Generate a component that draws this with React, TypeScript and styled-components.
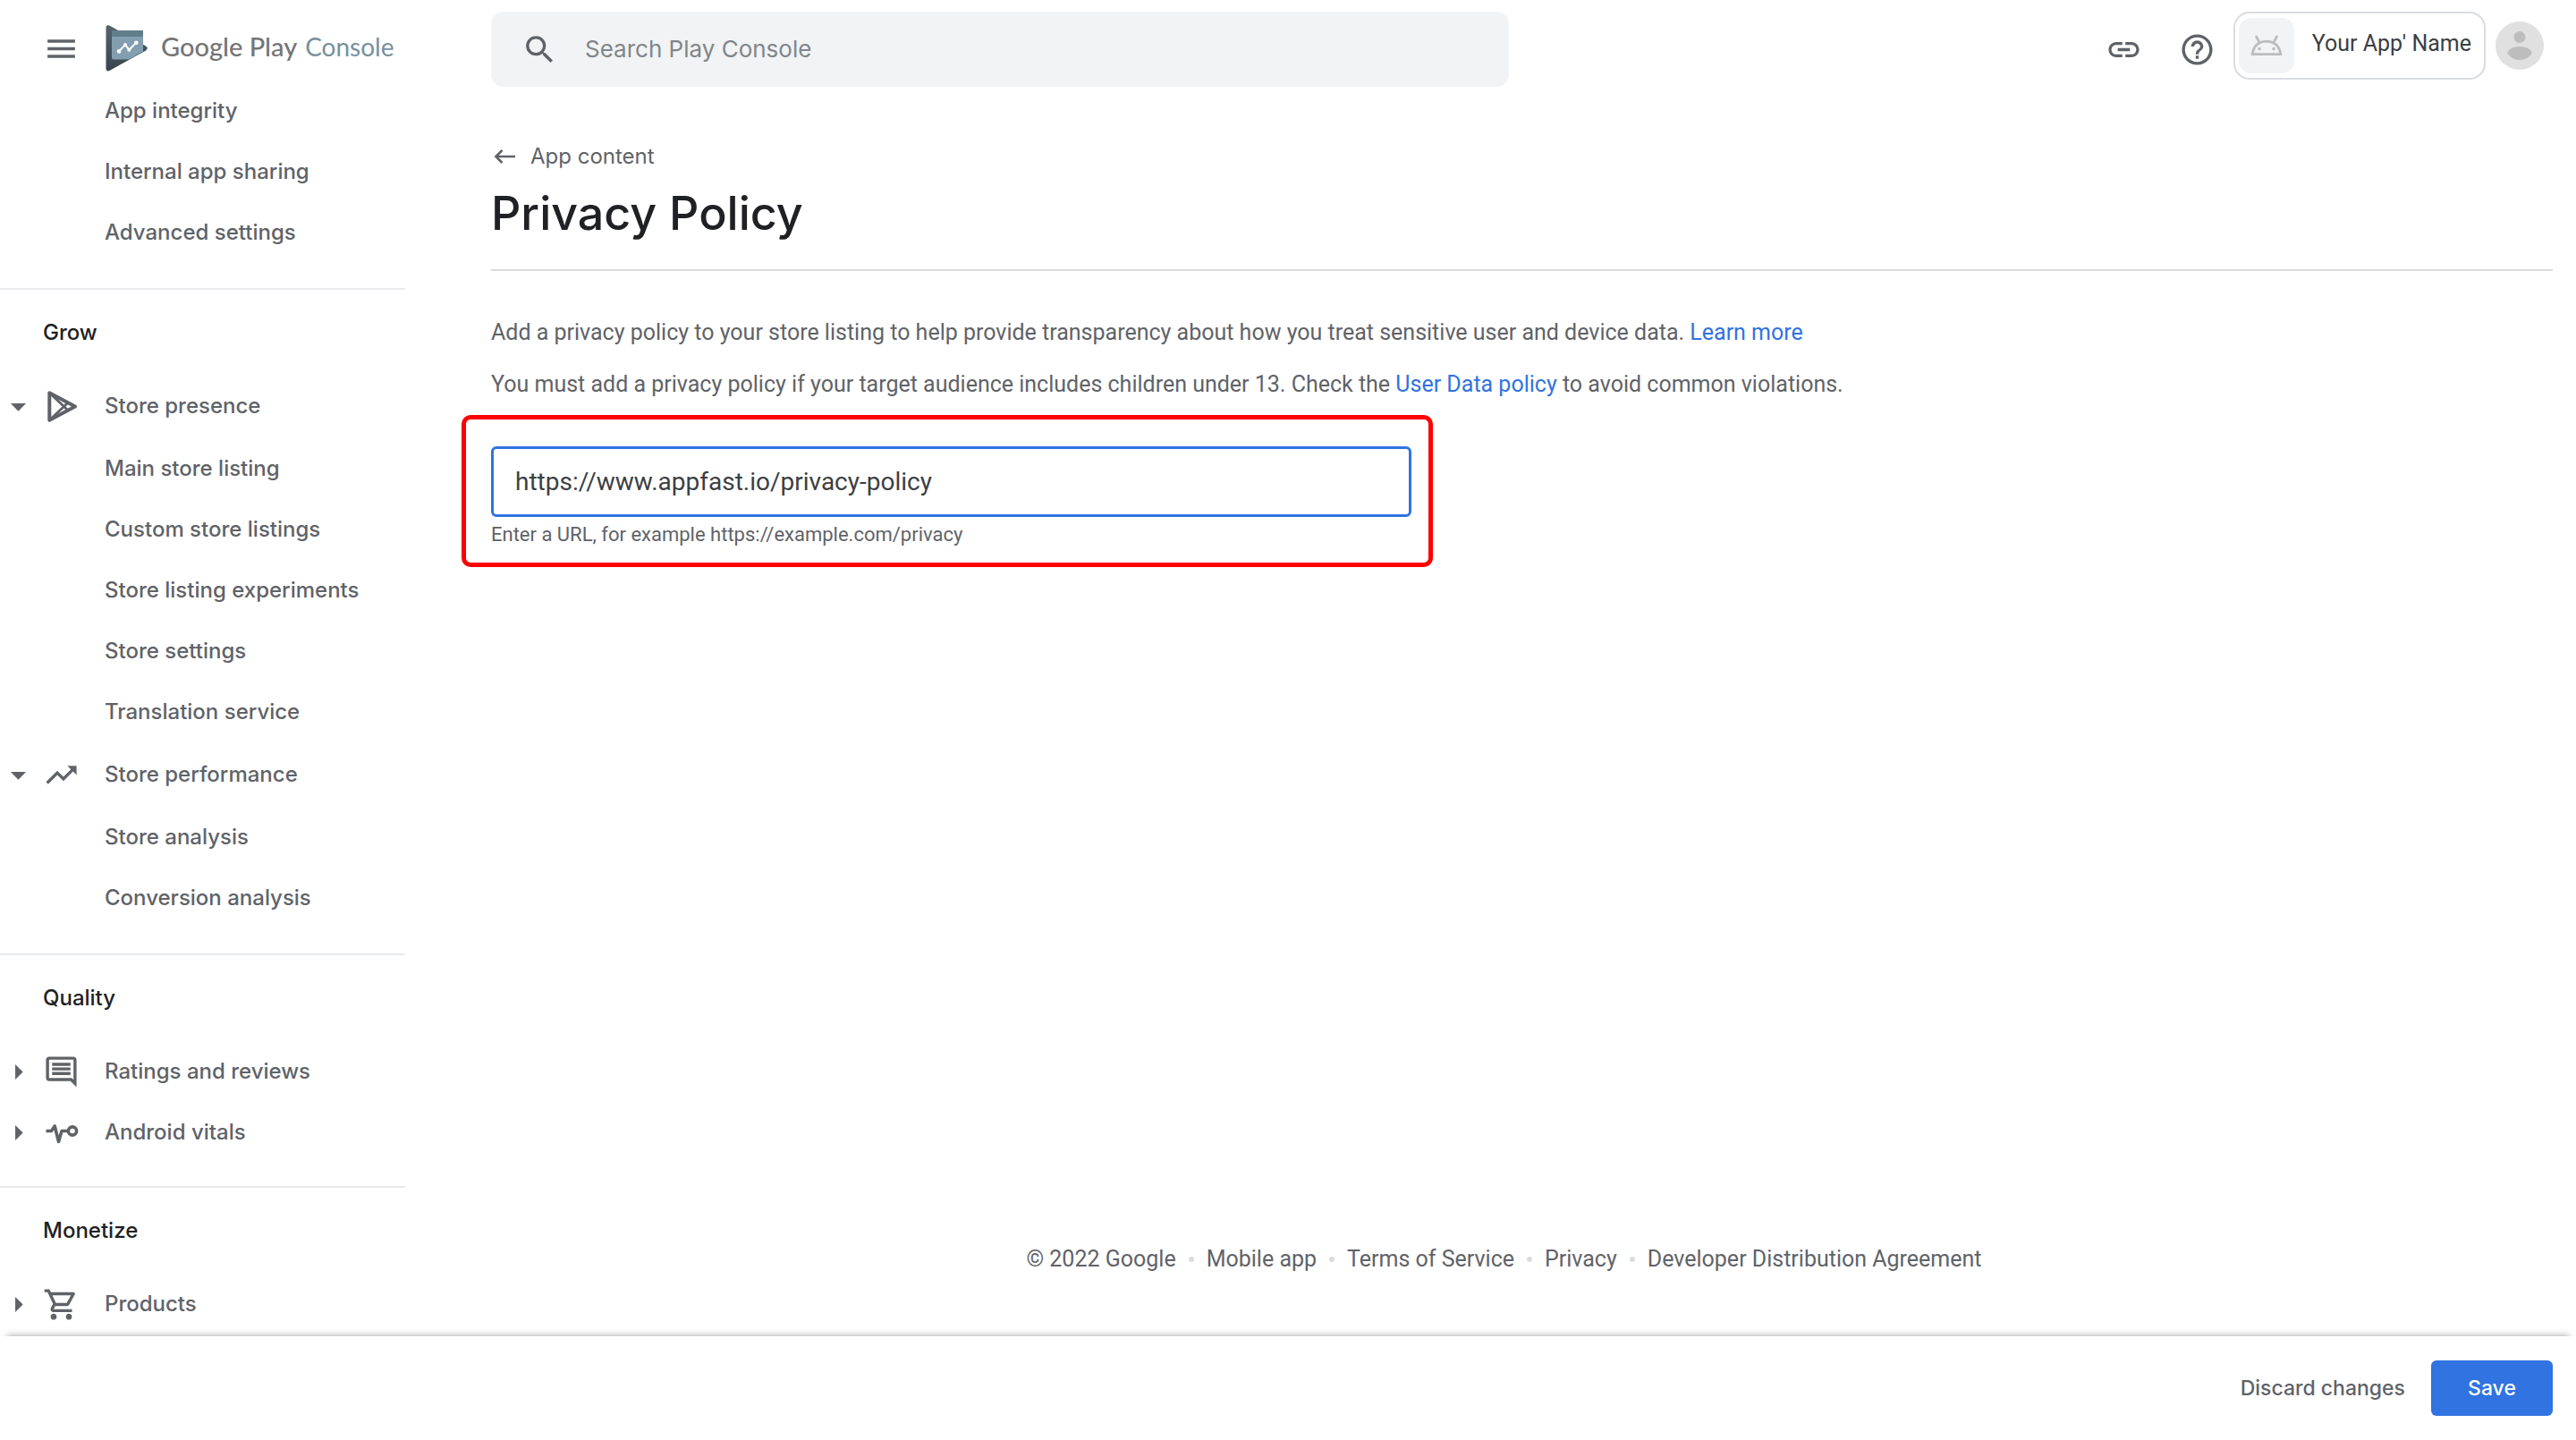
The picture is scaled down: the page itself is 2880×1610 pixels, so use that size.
import React from 'react';
import styled, { createGlobalStyle } from 'styled-components';
import {
  MdArrowDropDown,
  MdArrowRight,
  MdHelpOutline,
  MdLink,
  MdMenu,
  MdOutlineComment,
  MdOutlineShoppingCart,
  MdSearch,
  MdTrendingUp,
} from 'react-icons/md';

const color = {
  ink: '#202124',
  strong: '#3c4043',
  muted: '#5f6368',
  hint: '#80868b',
  line: '#dadce0',
  faintLine: '#e8eaed',
  fill: '#f1f3f4',
  blue: '#3073e1',
  mark: '#ff0000',
};

const display = `Inter, "Noto Sans", sans-serif`;
const text = `Roboto, "Noto Sans", sans-serif`;

const GlobalStyle = createGlobalStyle`
  *, *::before, *::after { box-sizing: border-box; }
  body { margin: 0; background: #fff; color: ${color.muted}; font: 400 25px/36px ${text}; }
  h1, h2, p, ul { margin: 0; padding: 0; }
  ul { list-style: none; }
  button, input { font: inherit; color: inherit; }
  button { padding: 0; border: 0; background: none; cursor: pointer; }
  a { color: inherit; text-decoration: none; }
  svg { display: block; flex: none; }
`;

const Page = styled.div`
  display: flex;
  flex-direction: column;
  height: 100vh;
`;

const Body = styled.div`
  display: grid;
  grid-template-columns: 453px minmax(0, 1fr);
  flex: 1;
  min-height: 0;
`;

/* Sidebar */

const Sidebar = styled.aside`
  overflow: hidden;
`;

const Brand = styled.div`
  display: flex;
  align-items: center;
  height: 88px;
  padding: 20px 0 0 48px;
`;

const MenuButton = styled.button`
  color: ${color.muted};
`;

const BrandLink = styled.a`
  display: flex;
  align-items: center;
  gap: 14px;
  margin-left: 29px;
`;

const Wordmark = styled.span`
  display: flex;
  align-items: baseline;
  gap: 9px;
  padding-bottom: 4px;
  font-family: Lato, "Noto Sans", sans-serif;
  font-weight: 500;
  font-size: 29px;
  white-space: nowrap;
  color: #757575;
`;

const WordmarkProduct = styled.span`
  font-weight: 400;
  font-size: 28px;
  color: #78909c;
`;

const NavSection = styled.section`
  padding-bottom: 26px;
  & + & {
    border-top: 2px solid ${color.faintLine};
  }
`;

const SectionTitle = styled.h2`
  padding-left: 48px;
  font: 500 24px/96px ${display};
  color: ${color.ink};
`;

const GroupButton = styled.button`
  display: flex;
  align-items: center;
  width: 100%;
  height: 68px;
  font: 500 24px/68px ${display};
  text-align: left;
`;

const GroupIcon = styled.span`
  margin: 0 28px 0 7px;
`;

const SubList = styled.ul`
  padding: 2px 0;
`;

const SubLink = styled.a`
  display: block;
  padding-left: 117px;
  font: 500 24px/68px ${display};
`;

/* Top bar */

const Main = styled.main`
  display: flex;
  flex-direction: column;
  padding: 0 26px 0 96px;
`;

const TopBar = styled.header`
  display: flex;
  align-items: flex-start;
  padding: 13px 0;
  margin-right: 10px;
`;

const SearchBox = styled.label`
  display: flex;
  align-items: center;
  flex: 0 1 1138px;
  height: 84px;
  padding: 0 34px;
  gap: 30px;
  border-radius: 14px;
  background: ${color.fill};
`;

const SearchInput = styled.input`
  flex: 1;
  min-width: 0;
  padding: 0;
  border: 0;
  outline: 0;
  background: none;
  font: 400 26px/36px ${display};
  &::placeholder {
    color: ${color.hint};
    opacity: 1;
  }
`;

const Tools = styled.div`
  display: flex;
  align-items: center;
  gap: 41px;
  height: 84px;
  margin: 0 20px 0 auto;
`;

const Account = styled.div`
  display: flex;
  align-items: center;
  gap: 11px;
`;

const AppButton = styled.button`
  display: flex;
  align-items: center;
  gap: 20px;
  height: 76px;
  padding: 0 14px 0 4px;
  border: 2px solid ${color.line};
  border-radius: 18px;
  color: ${color.strong};
`;

const AppIcon = styled.span`
  display: grid;
  place-items: center;
  width: 62px;
  height: 62px;
  border-radius: 14px;
  background: ${color.fill};
`;

const AppName = styled.span`
  padding-bottom: 4px;
`;

const AvatarButton = styled.button`
  border-radius: 50%;
`;

/* Page content */

const Back = styled.a`
  display: flex;
  align-items: center;
  align-self: flex-start;
  gap: 9px;
  margin-top: 47px;
  font: 400 24px/36px ${display};
`;

const Title = styled.h1`
  padding: 14px 0 30px;
  border-bottom: 2px solid ${color.line};
  font: 500 52px/64px ${display};
  color: ${color.ink};
`;

const Intro = styled.div`
  display: flex;
  flex-direction: column;
  gap: 22px;
  padding: 51px 0 16px;
`;

const TextLink = styled.a`
  color: ${color.blue};
`;

const Highlight = styled.div`
  display: flex;
  flex-direction: column;
  gap: 6px;
  max-width: 1086px;
  margin-left: -33px;
  padding: 30px 19px 17px 28px;
  border: 5px solid ${color.mark};
  border-radius: 10px;
`;

const UrlInput = styled.input`
  width: 100%;
  height: 79px;
  padding: 0 24px;
  border: 3px solid ${color.blue};
  border-radius: 6px;
  outline: 0;
  background: #fff;
  font-size: 28px;
  color: ${color.strong};
`;

const Helper = styled.label`
  font-size: 22px;
  line-height: 28px;
`;

const Footer = styled.footer`
  display: flex;
  justify-content: center;
  align-items: center;
  margin-top: auto;
  padding: 0 40px 68px 0;
`;

const FooterItem = styled.span`
  display: flex;
  align-items: center;
  & + &::before {
    content: '';
    width: 6px;
    height: 6px;
    margin: 0 14px;
    border-radius: 50%;
    background: ${color.line};
  }
`;

/* Action bar */

const ActionBar = styled.div`
  display: flex;
  justify-content: flex-end;
  align-items: center;
  gap: 29px;
  padding: 27px 26px;
  background: #fff;
  box-shadow: 0 -8px 8px -8px rgba(0, 0, 0, 0.4);
  font: 500 23px/62px ${display};
  position: relative;
`;

const SaveButton = styled.button`
  width: 136px;
  height: 62px;
  border-radius: 6px;
  background: ${color.blue};
  color: #fff;
`;

/* Drawings */

const Logo = () => (
  <svg width="48" height="52" viewBox="0 0 48 52" aria-hidden="true">
    <defs>
      <linearGradient id="edge" x1="0" y1="0" x2="0" y2="1">
        <stop offset="0" stopColor="#546369" />
        <stop offset="1" stopColor="#37464e" />
      </linearGradient>
      <clipPath id="panel">
        <path d="M7 6H42V29.6L26 38.6H8.6Q7 38.6 7 37Z" />
      </clipPath>
    </defs>
    <path d="M.5 3Q.5 -1 4.4 .6L45 23.4Q48.6 25.8 45 28.4L4.4 51Q.5 52.4 .5 48.6Z" fill="url(#edge)" />
    <g clipPath="url(#panel)">
      <rect x="7" y="6" width="35" height="33" fill="#829eb0" />
      <rect x="7" y="6" width="35" height="7" fill="#607d8b" />
    </g>
    <path d="M15 29.4L22 22L26.3 27.7L34.3 19.7" fill="none" stroke="#fff" strokeWidth="2" />
    <circle cx="15" cy="29.4" r="2.3" fill="#fff" />
    <circle cx="22" cy="22" r="2" fill="#fff" />
    <circle cx="26.3" cy="27.7" r="2" fill="#fff" />
    <circle cx="34.3" cy="19.7" r="2.3" fill="#fff" />
  </svg>
);

const PlayStore = () => (
  <svg width="41" height="41" viewBox="0 0 41 41" fill="none" stroke="currentColor" strokeLinejoin="round" aria-hidden="true">
    <path d="M7.3 5.2L36 20.5L7.3 35.8Z" strokeWidth="4" />
    <path d="M7.3 5.2L28 24.7M7.3 35.8L28 16.3" strokeWidth="2.8" />
  </svg>
);

const Vitals = () => (
  <svg width="41" height="41" viewBox="0 0 41 41" fill="none" stroke="currentColor" strokeWidth="3.6" strokeLinejoin="round" aria-hidden="true">
    <path d="M3.5 18.5H9.5L13.2 13L17.5 30.5L21 18.5H28.5" />
    <circle cx="33" cy="18.5" r="4.6" />
  </svg>
);

const Robot = () => (
  <svg width="36" height="24" viewBox="0 0 36 24" fill="none" stroke="#bdbdbd" strokeWidth="2.8" aria-hidden="true">
    <path d="M2.2 21.6Q4 8 18 7.2Q32 8 33.8 21.6Z" />
    <path d="M6.6 2L10 8.4M29.4 2L26 8.4" strokeLinecap="round" />
    <circle cx="10" cy="15.6" r="1.8" fill="#bdbdbd" stroke="none" />
    <circle cx="26" cy="15.6" r="1.8" fill="#bdbdbd" stroke="none" />
  </svg>
);

const Avatar = () => (
  <svg width="54" height="54" viewBox="0 0 54 54" aria-hidden="true">
    <circle cx="27" cy="27" r="27" fill="#e0e0e0" />
    <circle cx="27" cy="17.5" r="6.5" fill="#bdbdbd" />
    <path d="M13 35Q16 28 27 28Q38 28 41 35Q36 43 27 43Q18 43 13 35Z" fill="#bdbdbd" />
  </svg>
);

const BackArrow = () => (
  <svg width="35" height="24" viewBox="0 0 35 24" fill="none" stroke="currentColor" strokeWidth="2.6" aria-hidden="true">
    <path d="M27 12H5.6M12.4 5L5.4 12L12.4 19" />
  </svg>
);

/* Navigation data */

type Group = { label?: string; icon?: React.ReactNode; items?: string[] };
type Section = { title?: string; groups: Group[] };

const sections: Section[] = [
  { groups: [{ items: ['App integrity', 'Internal app sharing', 'Advanced settings'] }] },
  {
    title: 'Grow',
    groups: [
      {
        label: 'Store presence',
        icon: <PlayStore />,
        items: [
          'Main store listing',
          'Custom store listings',
          'Store listing experiments',
          'Store settings',
          'Translation service',
        ],
      },
      {
        label: 'Store performance',
        icon: <MdTrendingUp size={41} />,
        items: ['Store analysis', 'Conversion analysis'],
      },
    ],
  },
  {
    title: 'Quality',
    groups: [
      { label: 'Ratings and reviews', icon: <MdOutlineComment size={41} /> },
      { label: 'Android vitals', icon: <Vitals /> },
    ],
  },
  {
    title: 'Monetize',
    groups: [{ label: 'Products', icon: <MdOutlineShoppingCart size={41} /> }],
  },
];

const footerLinks = ['Mobile app', 'Terms of Service', 'Privacy', 'Developer Distribution Agreement'];

const NavGroup = ({ label, icon, items }: Group) => (
  <>
    {label && (
      <GroupButton type="button" aria-expanded={Boolean(items)}>
        {items ? <MdArrowDropDown size={41} /> : <MdArrowRight size={41} />}
        <GroupIcon>{icon}</GroupIcon>
        {label}
      </GroupButton>
    )}
    {items && (
      <SubList>
        {items.map((item) => (
          <li key={item}>
            <SubLink href="#">{item}</SubLink>
          </li>
        ))}
      </SubList>
    )}
  </>
);

export default function App() {
  return (
    <Page>
      <GlobalStyle />
      <Body>
        <Sidebar>
          <Brand>
            <MenuButton type="button" aria-label="Main menu">
              <MdMenu size={41} />
            </MenuButton>
            <BrandLink href="#">
              <Logo />
              <Wordmark>
                Google Play <WordmarkProduct>Console</WordmarkProduct>
              </Wordmark>
            </BrandLink>
          </Brand>
          <nav>
            {sections.map((section, i) => (
              <NavSection key={i}>
                {section.title && <SectionTitle>{section.title}</SectionTitle>}
                {section.groups.map((group, j) => (
                  <NavGroup key={j} {...group} />
                ))}
              </NavSection>
            ))}
          </nav>
        </Sidebar>

        <Main>
          <TopBar>
            <SearchBox>
              <MdSearch size={41} />
              <SearchInput type="search" placeholder="Search Play Console" aria-label="Search Play Console" />
            </SearchBox>
            <Tools>
              <button type="button" aria-label="Copy link">
                <MdLink size={41} />
              </button>
              <button type="button" aria-label="Help">
                <MdHelpOutline size={41} />
              </button>
            </Tools>
            <Account>
              <AppButton type="button">
                <AppIcon>
                  <Robot />
                </AppIcon>
                <AppName>Your App' Name</AppName>
              </AppButton>
              <AvatarButton type="button" aria-label="Account">
                <Avatar />
              </AvatarButton>
            </Account>
          </TopBar>

          <Back href="#">
            <BackArrow />
            App content
          </Back>
          <Title>Privacy Policy</Title>
          <Intro>
            <p>
              Add a privacy policy to your store listing to help provide transparency about how you treat sensitive
              user and device data. <TextLink href="#">Learn more</TextLink>
            </p>
            <p>
              You must add a privacy policy if your target audience includes children under 13. Check the{' '}
              <TextLink href="#">User Data policy</TextLink> to avoid common violations.
            </p>
          </Intro>
          <Highlight>
            <UrlInput id="policy-url" type="text" defaultValue="https://www.appfast.io/privacy-policy" />
            <Helper htmlFor="policy-url">Enter a URL, for example https://example.com/privacy</Helper>
          </Highlight>

          <Footer>
            <FooterItem>© 2022 Google</FooterItem>
            {footerLinks.map((label) => (
              <FooterItem key={label}>
                <a href="#">{label}</a>
              </FooterItem>
            ))}
          </Footer>
        </Main>
      </Body>

      <ActionBar>
        <button type="button">Discard changes</button>
        <SaveButton type="button">Save</SaveButton>
      </ActionBar>
    </Page>
  );
}
